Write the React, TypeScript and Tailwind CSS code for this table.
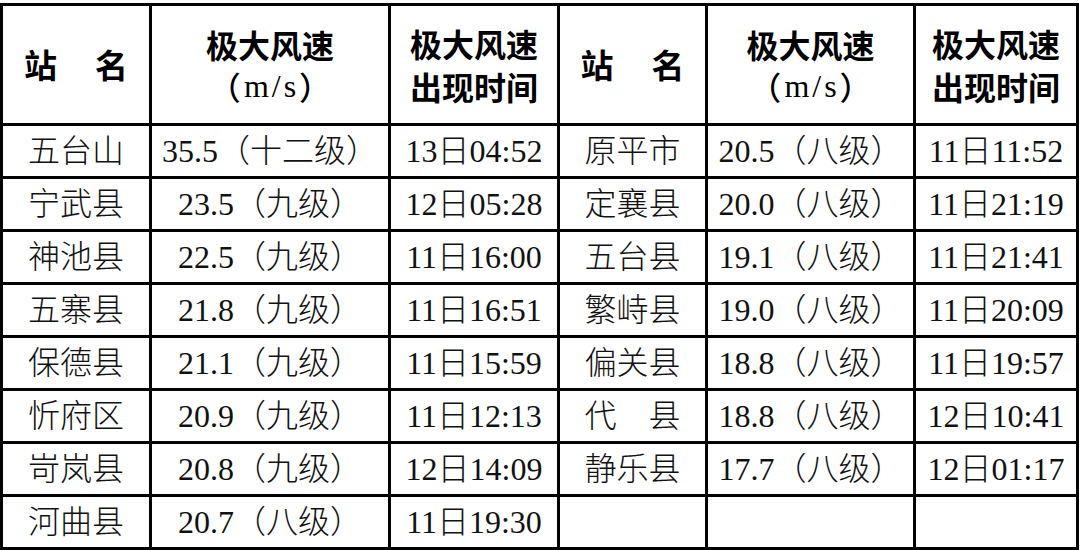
import React from "react";

const serif = "font-['Liberation_Serif','Noto_Sans_CJK_SC',serif]";

const rows: [string, string, string, string, string, string][] = [
  ["五台山", "35.5（十二级）", "13日04:52", "原平市", "20.5（八级）", "11日11:52"],
  ["宁武县", "23.5（九级）", "12日05:28", "定襄县", "20.0（八级）", "11日21:19"],
  ["神池县", "22.5（九级）", "11日16:00", "五台县", "19.1（八级）", "11日21:41"],
  ["五寨县", "21.8（九级）", "11日16:51", "繁峙县", "19.0（八级）", "11日20:09"],
  ["保德县", "21.1（九级）", "11日15:59", "偏关县", "18.8（八级）", "11日19:57"],
  ["忻府区", "20.9（九级）", "11日12:13", "代　县", "18.8（八级）", "12日10:41"],
  ["岢岚县", "20.8（九级）", "12日14:09", "静乐县", "17.7（八级）", "12日01:17"],
  ["河曲县", "20.7（八级）", "11日19:30", "", "", ""],
];

function HeadName() {
  return (
    <div className="bg-white flex items-center justify-center font-['Noto_Sans_CJK_SC',sans-serif] font-bold text-[33px] text-black">
      <span>站</span>
      <span className="w-[38px]" />
      <span>名</span>
    </div>
  );
}

function HeadSpeed() {
  return (
    <div className="bg-white flex flex-col items-center justify-center text-black leading-[42px]">
      <span className="font-['Noto_Sans_CJK_SC',sans-serif] font-bold text-[32px]">极大风速</span>
      <span className="font-['Noto_Sans_CJK_SC',sans-serif] text-[32px] font-medium flex items-center">
        <span>（</span>
        <span className="font-['Liberation_Serif',serif] tracking-[3px] pl-[3px]">m/s</span>
        <span>）</span>
      </span>
    </div>
  );
}

function HeadTime() {
  return (
    <div className="bg-white flex flex-col items-center justify-center text-black leading-[43px] font-['Noto_Sans_CJK_SC',sans-serif] font-bold text-[32px]">
      <span>极大风速</span>
      <span>出现时间</span>
    </div>
  );
}

function Cell({ text }: { text: string }) {
  return (
    <div className={`bg-white flex items-center justify-center whitespace-nowrap text-[32px] text-[#111] font-light ${serif}`}>
      {text}
    </div>
  );
}

export default function App() {
  return (
    <div className="w-[1080px] h-[550px] bg-white pt-[3px]">
      <div className="grid grid-cols-[146px_236px_166px_145px_205px_160px] grid-rows-[117px_repeat(8,50px)] gap-[3px] p-[3px] bg-black w-[1079px]">
        <HeadName />
        <HeadSpeed />
        <HeadTime />
        <HeadName />
        <HeadSpeed />
        <HeadTime />
        {rows.map((r, i) =>
          r.map((t, j) => <Cell key={`${i}-${j}`} text={t} />)
        )}
      </div>
    </div>
  );
}
